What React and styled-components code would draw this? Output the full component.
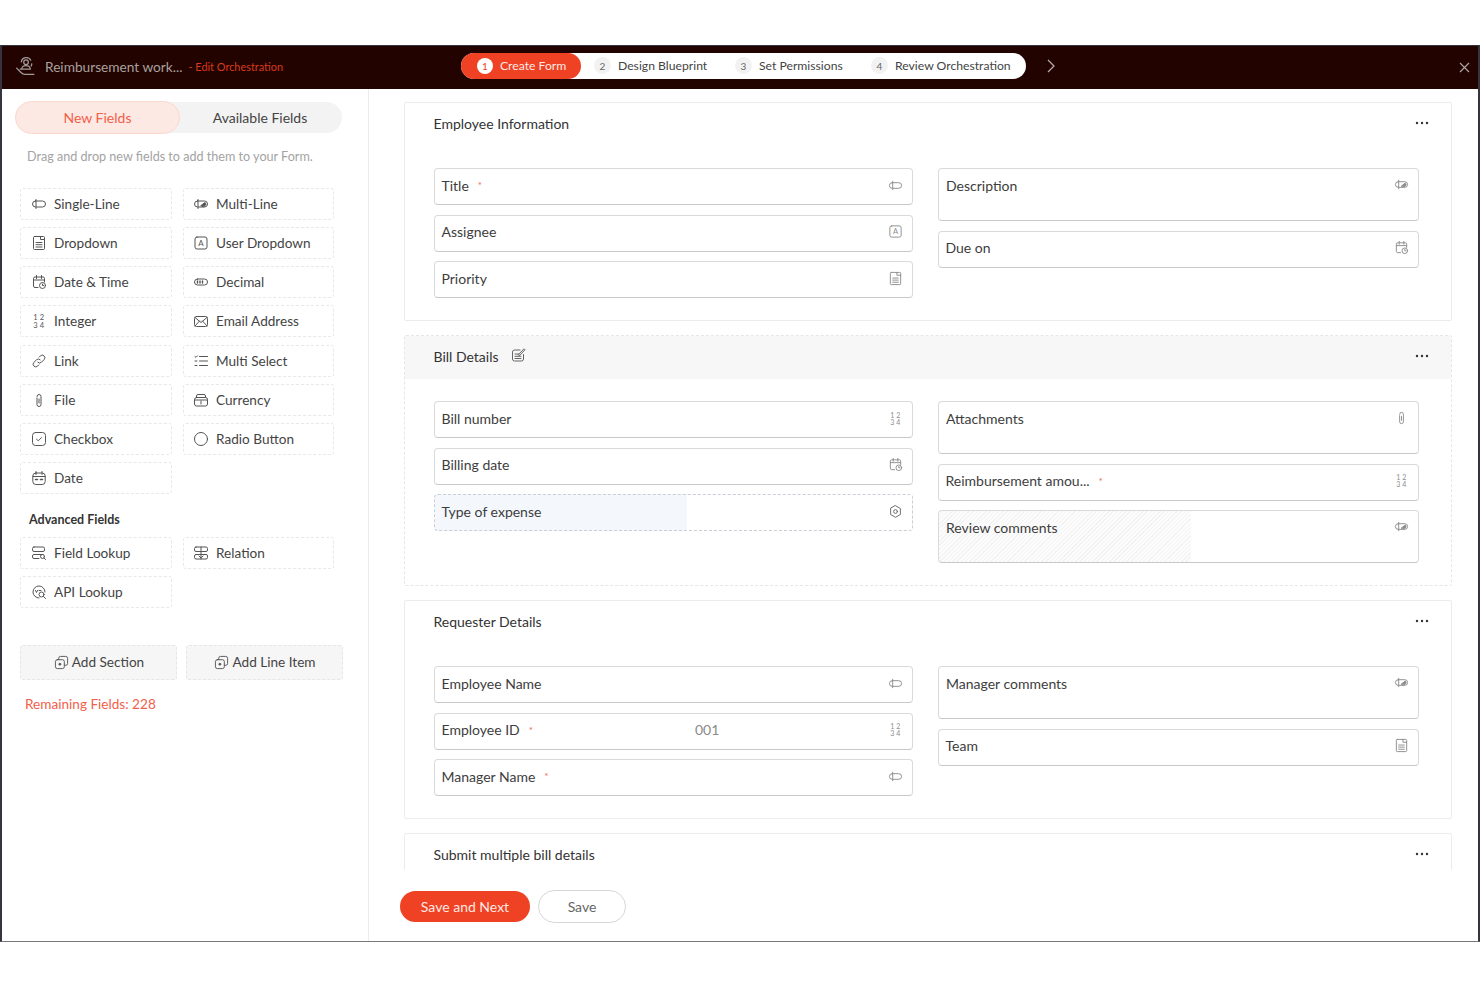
import React from 'react';
import styled, { createGlobalStyle } from 'styled-components';

const GlobalStyle = createGlobalStyle`
  html, body {
    margin: 0;
    padding: 0;
    background: #fff;
    font-family: Lato, "Open Sans", "Liberation Sans", sans-serif;
  }
`;

const Page = styled.div`
  width: 1480px;
  height: 987px;
  padding-top: 45px;
  box-sizing: border-box;
  overflow: hidden;
`;

const Frame = styled.div`
  height: 897px;
  box-sizing: border-box;
  border: 2px solid #34353d;
  border-bottom: 1px solid #77787c;
  border-top-width: 1px;
  display: flex;
  flex-direction: column;
`;

const Header = styled.header`
  height: 43px;
  flex: none;
  background: #220300;
  display: flex;
  align-items: center;
`;

const Brand = styled.div`
  width: 459px;
  flex: none;
  display: flex;
  align-items: center;
  padding: 0 0 2px 13px;
  box-sizing: border-box;
  color: #a39b99;
`;

const AppName = styled.span`
  font-size: 13.7px;
  margin-left: 9px;
  color: #a8a09e;
`;

const EditLink = styled.span`
  font-size: 10.9px;
  margin-left: 6px;
  color: #d93a1e;
`;

const Stepper = styled.div`
  width: 565px;
  height: 26px;
  margin-top: -4px;
  background: #fff;
  border-radius: 13px;
  display: flex;
  align-items: center;
  flex: none;
`;

const Step = styled.div`
  height: 26px;
  box-sizing: border-box;
  display: flex;
  align-items: center;
  gap: 7px;
  font-size: 12.2px;
  white-space: nowrap;
  color: ${(p) => (p.$active ? '#ffe9e4' : '#444')};
  background: ${(p) => (p.$active ? '#ef4123' : 'transparent')};
  border-radius: 13px;
  width: ${(p) => p.$width}px;
  padding-left: ${(p) => p.$left}px;
  flex: none;
`;

const StepNum = styled.span`
  width: ${(p) => (p.$active ? '16px' : '17px')};
  height: ${(p) => (p.$active ? '16px' : '17px')};
  border-radius: 50%;
  background: ${(p) => (p.$active ? '#fff' : '#f2f2f2')};
  color: ${(p) => (p.$active ? '#ef4123' : '#666')};
  display: flex;
  align-items: center;
  justify-content: center;
  font-size: 10px;
  flex: none;
`;

const Chevron = styled.svg`
  margin: -3px 0 0 19px;
  color: #b3abaa;
`;

const CloseBtn = styled.svg`
  margin-left: auto;
  margin-right: 8px;
  color: #aaa3a2;
`;

const Body = styled.div`
  flex: 1;
  min-height: 0;
  display: flex;
`;

const Sidebar = styled.aside`
  width: 367px;
  flex: none;
  box-sizing: border-box;
  border-right: 1px solid #ececec;
  padding: 13px 0 0 13px;
`;

const Tabs = styled.div`
  width: 327px;
  height: 31px;
  background: #f3f3f3;
  border-radius: 16px;
  display: flex;
  align-items: center;
`;

const Tab = styled.div`
  height: ${(p) => (p.$active ? '33px' : '31px')};
  box-sizing: border-box;
  width: ${(p) => (p.$active ? '165px' : '160px')};
  display: flex;
  align-items: center;
  justify-content: center;
  font-size: 14px;
  border-radius: 17px;
  color: ${(p) => (p.$active ? '#f2604a' : '#444')};
  background: ${(p) => (p.$active ? '#fde9e4' : 'transparent')};
  border: ${(p) => (p.$active ? '1px solid #fbd8cf' : 'none')};
`;

const Hint = styled.p`
  margin: 16px 0 0 12px;
  font-size: 12.6px;
  line-height: 16px;
  color: #a3a3a3;
`;

const TileGrid = styled.div`
  display: grid;
  grid-template-columns: 152px 151px;
  column-gap: 11px;
  row-gap: 7.15px;
  margin-left: 5px;
  margin-top: ${(p) => p.$top}px;
`;

const Tile = styled.div`
  height: 32px;
  box-sizing: border-box;
  border: 1px dashed #e8e8e8;
  border-radius: 3px;
  display: flex;
  align-items: center;
  padding-left: 9px;
  gap: 7px;
  font-size: 13.6px;
  color: #444;

  &:nth-child(even) {
    padding-left: 8px;
  }
`;

const IconSlot = styled.span`
  width: 17px;
  height: 17px;
  flex: none;
  display: flex;
  align-items: center;
  justify-content: center;
  color: ${(p) => p.$color || '#555'};
`;

const GroupTitle = styled.div`
  margin: 18px 0 0 14px;
  font-size: 12.5px;
  line-height: 16px;
  font-weight: 700;
  color: #333;
`;

const AddRow = styled.div`
  display: flex;
  gap: 9px;
  margin: 37px 0 0 5px;
`;

const AddButton = styled.div`
  width: 157px;
  height: 35px;
  box-sizing: border-box;
  padding-bottom: 1px;
  background: #f6f6f6;
  border: 1px dashed #e6e6e6;
  border-radius: 3px;
  display: flex;
  align-items: center;
  justify-content: center;
  gap: 2px;
  font-size: 13.6px;
  color: #444;
`;

const Remaining = styled.div`
  margin: 15px 0 0 10px;
  font-size: 13.6px;
  line-height: 18px;
  color: #f2604a;
`;

const Main = styled.main`
  flex: 1;
  min-width: 0;
  display: flex;
  flex-direction: column;
`;

const Scroller = styled.div`
  height: 781px;
  flex: none;
  overflow: hidden;
  box-sizing: border-box;
  padding: 13px 26px 0 35px;
  display: flex;
  flex-direction: column;
  gap: 14px;
`;

const Section = styled.section`
  flex: none;
  border: 1px ${(p) => (p.$dashed ? 'dashed #e6e6e6' : 'solid #ececec')};
  border-radius: 2px;
`;

const SectionHead = styled.div`
  height: 43px;
  box-sizing: border-box;
  display: flex;
  align-items: center;
  padding: 0 22px 3px 28.5px;
  background: ${(p) => (p.$shaded ? '#f7f7f7' : 'transparent')};
`;

const SectionTitle = styled.h3`
  margin: 0;
  font-size: 14px;
  font-weight: 400;
  color: #333;
`;

const EditIcon = styled.span`
  display: flex;
  margin-left: 11px;
  margin-top: -2px;
  color: #666;
`;

const More = styled.svg`
  margin-left: auto;
  color: #333;
`;

const Columns = styled.div`
  display: grid;
  grid-template-columns: 479px 481px;
  column-gap: 25px;
  padding: 22px 0 22px 29px;
`;

const Column = styled.div`
  display: flex;
  flex-direction: column;
  gap: 9.5px;
`;

const Input = styled.div`
  height: ${(p) => (p.$tall ? '53px' : '37px')};
  box-sizing: border-box;
  border: 1px ${(p) => (p.$dashed ? 'dashed #c9ced6' : 'solid #dadada')};
  ${(p) => !p.$dashed && 'border-bottom-color: #c8c8c8;'}
  border-radius: 4px;
  display: flex;
  align-items: ${(p) => (p.$tall ? 'flex-start' : 'center')};
  padding: ${(p) => (p.$tall ? '7.5px 9px 0 7px' : '0 9px 3px 6.5px')};
  font-size: 14px;
  color: #3d3d3d;
  background: ${(p) => {
    if (p.$fill === 'blue') return 'linear-gradient(to right, #f4f8fd 252px, #fff 252px)';
    if (p.$fill === 'hatch')
      return 'repeating-linear-gradient(135deg, #f3f3f3 0 1px, #fcfcfc 1px 3px) left top / 252px 100% no-repeat';
    return '#fff';
  }};
`;

const Label = styled.div`
  width: 253.5px;
  flex: none;
  display: flex;
  align-items: center;
  white-space: nowrap;
`;

const Star = styled.span`
  color: #ef6a5a;
  font-size: 10px;
  margin-left: 9px;
`;

const Value = styled.span`
  color: #8a8a8a;
`;

const InputIcon = styled.span`
  margin-left: auto;
  display: flex;
  color: ${(p) => (p.$dark ? '#666' : '#8c8c8c')};
`;

const Footer = styled.div`
  flex: 1;
  display: flex;
  align-items: flex-start;
  gap: 8px;
  padding: 20px 0 0 31px;
`;

const PrimaryBtn = styled.button`
  width: 130px;
  height: 31px;
  margin-top: 1px;
  border: none;
  border-radius: 16px;
  background: #ef4123;
  color: #ffe9e4;
  font: 400 14px Lato, sans-serif;
`;

const GhostBtn = styled.button`
  width: 88px;
  height: 33px;
  border: 1px solid #d6d6d6;
  border-radius: 17px;
  background: #fff;
  color: #666;
  font: 400 14px Lato, sans-serif;
`;

const Svg = ({ size = 16, children }) => (
  <svg width={size} height={size} viewBox="0 0 16 16" fill="none" stroke="currentColor" strokeWidth="1" strokeLinecap="round" strokeLinejoin="round">
    {children}
  </svg>
);

const glyphs = {
  single: (
    <>
      <rect x="1.5" y="5" width="13" height="6" rx="3" />
      <path d="M5 3.5v9" />
    </>
  ),
  multi: (
    <>
      <rect x="1.5" y="5" width="13" height="6" rx="3" />
      <path d="M5 3.5v9" />
      <path d="M8 9.5l4-3 1 2-2 2z" fill="currentColor" />
    </>
  ),
  dropdown: (
    <>
      <path d="M3.5 1.5h9a1 1 0 0 1 1 1v11a1 1 0 0 1-1 1h-9a1 1 0 0 1-1-1v-11a1 1 0 0 1 1-1z" />
      <path d="M5 7.5h6M5 9.7h6M5 12h6M9.5 1.5v3h4" />
    </>
  ),
  user: (
    <>
      <rect x="2" y="2" width="12" height="12" rx="2" />
      <text x="8" y="11" textAnchor="middle" fontSize="8" stroke="none" fill="currentColor" fontFamily="Lato, sans-serif">A</text>
    </>
  ),
  datetime: (
    <>
      <path d="M7 13.5H4a1.5 1.5 0 0 1-1.5-1.5V4.5A1.5 1.5 0 0 1 4 3h8a1.5 1.5 0 0 1 1.5 1.5V8" />
      <path d="M5.5 1.5v3M10.5 1.5v3M2.5 6h11" />
      <circle cx="11.5" cy="11.5" r="3" />
      <path d="M11.5 10v1.5h1.2" />
    </>
  ),
  decimal: (
    <>
      <rect x="1.5" y="5" width="13" height="6" rx="3" />
      <path d="M4.5 7v2M7 7v2M9.5 7v2" strokeWidth="1.4" />
    </>
  ),
  integer: (
    <g stroke="none" fill="currentColor" fontSize="7.5" fontFamily="Lato, sans-serif" textAnchor="middle">
      <text x="4.5" y="7">1</text>
      <text x="11" y="7">2</text>
      <text x="4.5" y="15">3</text>
      <text x="11" y="15">4</text>
    </g>
  ),
  email: (
    <>
      <rect x="1.5" y="3.5" width="13" height="10" rx="2" />
      <path d="M2 4.5l6 5 6-5M2 13l4.5-5M14 13l-4.5-5" />
    </>
  ),
  link: (
    <>
      <path d="M6.8 9.2a2.6 2.6 0 0 0 3.7 0l2.6-2.6a2.6 2.6 0 0 0-3.7-3.7L8.2 4.1" />
      <path d="M9.2 6.8a2.6 2.6 0 0 0-3.7 0l-2.6 2.6a2.6 2.6 0 0 0 3.7 3.7l1.2-1.2" />
    </>
  ),
  list: (
    <>
      <path d="M6.5 3.5h8M6.5 8h8M6.5 12.5h8" />
      <path d="M2 3.5l1 .8L4.5 2.8M2 8h2M2 12.5h2" />
    </>
  ),
  file: (
    <>
      <path d="M6 5.5v6.5a2 2 0 0 0 4 0V4a2 2 0 0 0-4 0" transform="translate(0 .5)" />
      <path d="M8 7v4" />
    </>
  ),
  currency: (
    <>
      <rect x="1.5" y="5.5" width="13" height="8.5" rx="2" />
      <path d="M3.5 5.5V4a1.5 1.5 0 0 1 1.5-1.5h6A1.5 1.5 0 0 1 12.5 4v1.5" />
      <path d="M1.5 8h13M8 9v3" />
    </>
  ),
  checkbox: (
    <>
      <rect x="1.5" y="1.5" width="13" height="13" rx="3" />
      <path d="M5.5 8.2l1.8 1.6 3.2-3.2" />
    </>
  ),
  radio: <circle cx="8" cy="8" r="6.5" />,
  date: (
    <>
      <rect x="1.8" y="3" width="12.4" height="11.5" rx="3" />
      <path d="M5 1.5v3M11 1.5v3M2 6.5h12" />
      <path d="M4.5 9.5h2M9.5 9.5h2" strokeWidth="1.6" />
    </>
  ),
  fieldLookup: (
    <>
      <rect x="1.5" y="2" width="12" height="4.5" rx="1.5" />
      <path d="M8 13.5H3A1.5 1.5 0 0 1 1.5 12v-1A1.5 1.5 0 0 1 3 9.5h9" />
      <circle cx="11.5" cy="11.5" r="2" />
      <path d="M13 13l1.5 1.5" />
    </>
  ),
  relation: (
    <>
      <rect x="1.5" y="2" width="13" height="4.5" rx="1.5" />
      <rect x="1.5" y="9.5" width="13" height="4.5" rx="1.5" />
      <path d="M8 2v12" />
      <path d="M6 11l2 2 2-2" />
    </>
  ),
  api: (
    <>
      <path d="M8 14a6 6 0 1 1 6-6" />
      <circle cx="10.5" cy="10.5" r="2.5" />
      <path d="M12.5 12.5l2 2M4.5 6.5l1 2 1-2M8 6.5h2" />
    </>
  ),
  add: (
    <>
      <rect x="1.5" y="5" width="9.5" height="9.5" rx="2" />
      <path d="M5 5V3.5a2 2 0 0 1 2-2h5.5a2 2 0 0 1 2 2V9a2 2 0 0 1-2 2H11" />
      <circle cx="6.2" cy="9.8" r="1" fill="currentColor" />
    </>
  ),
  note: (
    <>
      <path d="M13.5 7.5V12a2 2 0 0 1-2 2h-7a2 2 0 0 1-2-2V5a2 2 0 0 1 2-2H10" />
      <path d="M5 7h4M5 9.3h6M5 11.5h6" />
      <path d="M8.5 7.5L14 1.8l1 1L9.5 8.5z" />
    </>
  ),
  gear: (
    <>
      <path d="M8 1.8l5.2 3v6.4L8 14.2l-5.2-3V4.8z" />
      <circle cx="8" cy="8" r="2" />
    </>
  ),
};

const Icon = ({ name, size }) => <Svg size={size}>{glyphs[name]}</Svg>;

const fieldTiles = [
  ['single', 'Single-Line'],
  ['multi', 'Multi-Line'],
  ['dropdown', 'Dropdown'],
  ['user', 'User Dropdown'],
  ['datetime', 'Date & Time'],
  ['decimal', 'Decimal'],
  ['integer', 'Integer'],
  ['email', 'Email Address'],
  ['link', 'Link'],
  ['list', 'Multi Select'],
  ['file', 'File'],
  ['currency', 'Currency'],
  ['checkbox', 'Checkbox'],
  ['radio', 'Radio Button'],
  ['date', 'Date'],
];

const advancedTiles = [
  ['fieldLookup', 'Field Lookup'],
  ['relation', 'Relation'],
  ['api', 'API Lookup'],
];

const sections = [
  {
    title: 'Employee Information',
    left: [
      { label: 'Title', icon: 'single', required: true },
      { label: 'Assignee', icon: 'user' },
      { label: 'Priority', icon: 'dropdown' },
    ],
    right: [
      { label: 'Description', icon: 'multi', tall: true },
      { label: 'Due on', icon: 'datetime' },
    ],
  },
  {
    title: 'Bill Details',
    editable: true,
    left: [
      { label: 'Bill number', icon: 'integer' },
      { label: 'Billing date', icon: 'datetime' },
      { label: 'Type of expense', icon: 'gear', fill: 'blue', dashed: true },
    ],
    right: [
      { label: 'Attachments', icon: 'file', tall: true },
      { label: 'Reimbursement amou...', icon: 'integer', required: true },
      { label: 'Review comments', icon: 'multi', tall: true, fill: 'hatch' },
    ],
  },
  {
    title: 'Requester Details',
    left: [
      { label: 'Employee Name', icon: 'single' },
      { label: 'Employee ID', icon: 'integer', required: true, value: '001' },
      { label: 'Manager Name', icon: 'single', required: true },
    ],
    right: [
      { label: 'Manager comments', icon: 'multi', tall: true },
      { label: 'Team', icon: 'dropdown' },
    ],
  },
];

const FieldInput = ({ field }) => (
  <Input $tall={field.tall} $fill={field.fill} $dashed={field.dashed}>
    <Label>
      {field.label}
      {field.required && <Star>*</Star>}
    </Label>
    {field.value && <Value>{field.value}</Value>}
    <InputIcon $dark={field.dashed}>
      <Icon name={field.icon} size={15} />
    </InputIcon>
  </Input>
);

const MoreDots = () => (
  <More width="14" height="4" viewBox="0 0 14 4" fill="currentColor">
    <circle cx="2" cy="2" r="1.2" />
    <circle cx="7" cy="2" r="1.2" />
    <circle cx="12" cy="2" r="1.2" />
  </More>
);

const Logo = () => (
  <svg width="21" height="21" viewBox="0 0 20 20" fill="none" stroke="currentColor" strokeWidth="1.2" strokeLinecap="round" strokeLinejoin="round">
    <circle cx="10.5" cy="6" r="2.2" />
    <path d="M6.5 12c.4-2 2-2.8 4-2.8s3.6.8 4 2.8" />
    <path d="M6 5.5a4.8 4.8 0 0 1 9-1.4M16 7.5a5 5 0 0 1-.6 2" />
    <path d="M1.5 11.5l4.5 4.5c1 1 2 1.4 3.5 1.4h8.5" />
    <path d="M5 12.5h9.5" />
  </svg>
);

const App = () => (
  <Page>
    <GlobalStyle />
    <Frame>
      <Header>
        <Brand>
          <Logo />
          <AppName>Reimbursement work...</AppName>
          <EditLink>- Edit Orchestration</EditLink>
        </Brand>
        <Stepper>
          <Step $active $width={120} $left={16}>
            <StepNum $active>1</StepNum>
            Create Form
          </Step>
          <Step $width={141} $left={13}>
            <StepNum>2</StepNum>
            Design Blueprint
          </Step>
          <Step $width={136} $left={13}>
            <StepNum>3</StepNum>
            Set Permissions
          </Step>
          <Step $width={150} $left={13}>
            <StepNum>4</StepNum>
            Review Orchestration
          </Step>
        </Stepper>
        <Chevron width="12" height="14" viewBox="0 0 12 14" fill="none" stroke="currentColor" strokeWidth="1.3">
          <path d="M3 1l6 6-6 6" />
        </Chevron>
        <CloseBtn width="11" height="11" viewBox="0 0 11 11" fill="none" stroke="currentColor" strokeWidth="1.2">
          <path d="M1 1l9 9M10 1l-9 9" />
        </CloseBtn>
      </Header>
      <Body>
        <Sidebar>
          <Tabs>
            <Tab $active>New Fields</Tab>
            <Tab>Available Fields</Tab>
          </Tabs>
          <Hint>Drag and drop new fields to add them to your Form.</Hint>
          <TileGrid $top={23}>
            {fieldTiles.map(([icon, label]) => (
              <Tile key={label}>
                <IconSlot>
                  <Icon name={icon} size={16} />
                </IconSlot>
                {label}
              </Tile>
            ))}
          </TileGrid>
          <GroupTitle>Advanced Fields</GroupTitle>
          <TileGrid $top={9}>
            {advancedTiles.map(([icon, label]) => (
              <Tile key={label}>
                <IconSlot>
                  <Icon name={icon} size={16} />
                </IconSlot>
                {label}
              </Tile>
            ))}
          </TileGrid>
          <AddRow>
            <AddButton>
              <IconSlot>
                <Icon name="add" size={15} />
              </IconSlot>
              Add Section
            </AddButton>
            <AddButton>
              <IconSlot>
                <Icon name="add" size={15} />
              </IconSlot>
              Add Line Item
            </AddButton>
          </AddRow>
          <Remaining>Remaining Fields: 228</Remaining>
        </Sidebar>
        <Main>
          <Scroller>
            {sections.map((section) => (
              <Section key={section.title} $dashed={section.editable}>
                <SectionHead $shaded={section.editable}>
                  <SectionTitle>{section.title}</SectionTitle>
                  {section.editable && (
                    <EditIcon>
                      <Icon name="note" size={16} />
                    </EditIcon>
                  )}
                  <MoreDots />
                </SectionHead>
                <Columns>
                  <Column>
                    {section.left.map((field) => (
                      <FieldInput key={field.label} field={field} />
                    ))}
                  </Column>
                  <Column>
                    {section.right.map((field) => (
                      <FieldInput key={field.label} field={field} />
                    ))}
                  </Column>
                </Columns>
              </Section>
            ))}
            <Section>
              <SectionHead>
                <SectionTitle>Submit multiple bill details</SectionTitle>
                <MoreDots />
              </SectionHead>
            </Section>
          </Scroller>
          <Footer>
            <PrimaryBtn>Save and Next</PrimaryBtn>
            <GhostBtn>Save</GhostBtn>
          </Footer>
        </Main>
      </Body>
    </Frame>
  </Page>
);

export default App;
